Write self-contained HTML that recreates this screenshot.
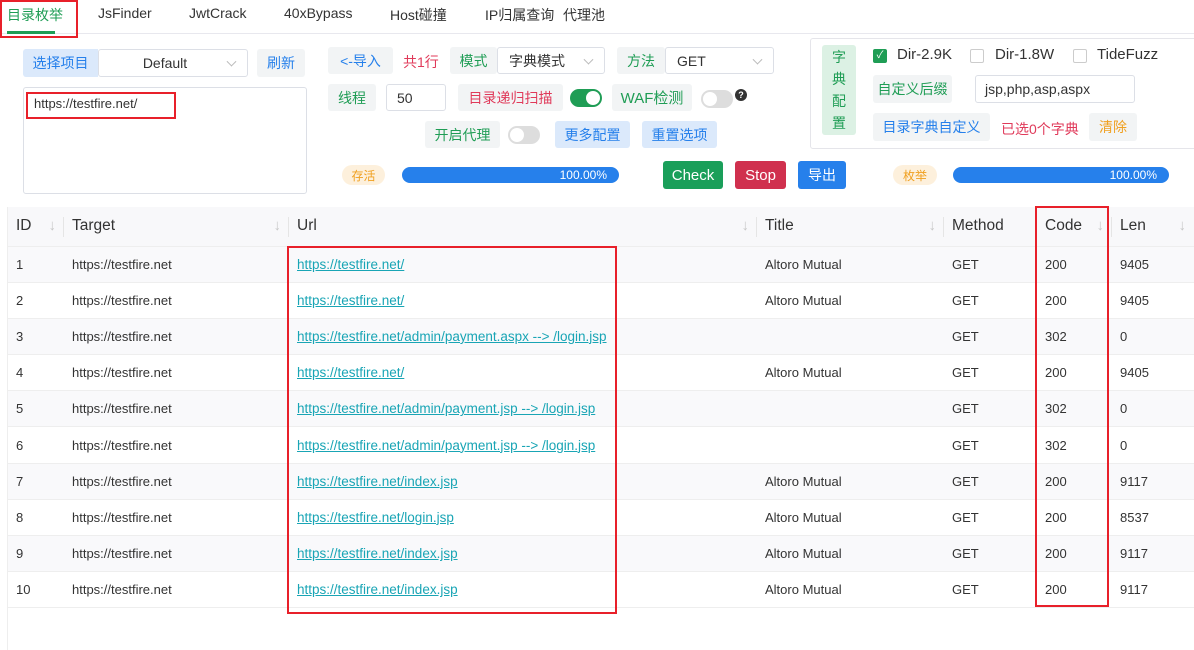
<!DOCTYPE html>
<html><head><meta charset="utf-8"><style>
*{box-sizing:border-box;margin:0;padding:0}
body{width:1194px;height:650px;overflow:hidden;background:#fff;font-family:"Liberation Sans","Noto Sans CJK SC",sans-serif;font-size:14px;color:#333;position:relative}
.a{position:absolute}
.btn{position:absolute;display:flex;align-items:center;justify-content:center;border-radius:3px;background:#f2f4f5;font-size:14px}
.g{color:#1f9d55}.b{color:#2680eb}.r{color:#e03a5a}.o{color:#f0a020}
.sel{position:absolute;border:1px solid #dcdfe6;border-radius:3px;background:#fff;display:flex;align-items:center;font-size:14px;color:#333}
.sel:after{content:"";position:absolute;right:12px;top:50%;width:6px;height:6px;border-right:1px solid #bbb;border-bottom:1px solid #bbb;transform:translateY(-70%) rotate(45deg)}
.sel.n:after{display:none}
.sw{position:absolute;width:32px;height:18px;border-radius:9px;background:#ddd}
.sw i{position:absolute;top:2px;left:2px;width:14px;height:14px;border-radius:50%;background:#fff}
.sw.on{background:#1f9d55}.sw.on i{left:16px}
.bar{position:absolute;height:16px;border-radius:8px;background:#2680eb;color:#fff;font-size:12px;text-align:right;padding-right:12px;line-height:16px}
.badge{position:absolute;height:20px;border-radius:10px;background:#fdf0dc;color:#f0a020;font-size:12px;display:flex;align-items:center;justify-content:center}
.cb{position:absolute;width:14px;height:14px;border:1px solid #ccc;border-radius:2px;background:#fff}
.rb{position:absolute;border:2px solid #e8202a}
table{position:absolute;left:8px;top:207px;border-collapse:collapse;table-layout:fixed;width:1186px}
th{height:39px;background:#f8f8fa;font-weight:normal;text-align:left;font-size:15.5px;color:#333;border-bottom:1px solid #eee;position:relative;padding-left:8px}
th .ar{position:absolute;right:8px;top:10px;color:#c8c8c8;font-size:15px}
th .dv{position:absolute;right:0;top:10px;height:20px;border-right:1px solid #e5e5e5}
td{height:36.2px;font-size:13px;color:#333;padding-left:8px;border-bottom:1px solid #eee;white-space:nowrap}
tr:nth-child(even) td{background:#f9f9fb}
td a{color:#19a5b5;text-decoration:underline;font-size:13.5px}
</style></head><body>
<div class="a" style="left:0;top:33px;width:1194px;border-bottom:1px solid #e8e8ee"></div>
<div class="a g" style="left:7px;top:5px">目录枚举</div>
<div class="a" style="left:7px;top:31px;width:48px;height:3px;background:#1f9d55"></div>
<div class="a" style="left:98px;top:5px">JsFinder</div>
<div class="a" style="left:189px;top:5px">JwtCrack</div>
<div class="a" style="left:284px;top:5px">40xBypass</div>
<div class="a" style="left:390px;top:5px">Host碰撞</div>
<div class="a" style="left:485px;top:5px">IP归属查询</div>
<div class="a" style="left:563px;top:5px">代理池</div>
<div class="rb" style="left:0;top:0;width:78px;height:38px"></div>

<div class="btn b" style="left:23px;top:49px;width:75px;height:28px;background:#dbe9fb;border-radius:3px 0 0 3px">选择项目</div>
<div class="sel" style="left:98px;top:49px;width:150px;height:28px;justify-content:center;padding-right:16px">Default</div>
<div class="btn b" style="left:257px;top:49px;width:48px;height:28px">刷新</div>
<div class="a" style="left:23px;top:87px;width:284px;height:107px;border:1px solid #dcdfe6;border-radius:3px"></div>
<div class="a" style="left:34px;top:96px;font-size:13px">https://testfire.net/</div>
<div class="rb" style="left:26px;top:92px;width:150px;height:27px"></div>

<div class="btn b" style="left:328px;top:47px;width:65px;height:27px">&lt;-导入</div>
<div class="a r" style="left:403px;top:52px">共1行</div>
<div class="btn g" style="left:450px;top:47px;width:47px;height:27px">模式</div>
<div class="sel" style="left:497px;top:47px;width:108px;height:27px;padding-left:11px">字典模式</div>
<div class="btn g" style="left:617px;top:47px;width:48px;height:27px">方法</div>
<div class="sel" style="left:665px;top:47px;width:109px;height:27px;padding-left:11px">GET</div>

<div class="btn g" style="left:328px;top:84px;width:48px;height:27px">线程</div>
<div class="sel n" style="left:386px;top:84px;width:60px;height:27px;padding-left:10px">50</div>
<div class="btn r" style="left:458px;top:84px;width:105px;height:27px">目录递归扫描</div>
<div class="sw on" style="left:570px;top:89px"><i></i></div>
<div class="btn g" style="left:612px;top:84px;width:80px;height:27px;font-size:15px">WAF检测</div>
<div class="sw" style="left:701px;top:90px"><i></i></div>
<div class="a" style="left:735px;top:89px;width:12px;height:12px;border-radius:50%;background:#333;color:#fff;font-size:9px;text-align:center;line-height:12px;font-weight:bold">?</div>

<div class="btn g" style="left:425px;top:121px;width:75px;height:27px">开启代理</div>
<div class="sw" style="left:508px;top:126px"><i></i></div>
<div class="btn b" style="left:555px;top:121px;width:75px;height:27px;background:#dbe9fb">更多配置</div>
<div class="btn b" style="left:642px;top:121px;width:75px;height:27px;background:#dbe9fb">重置选项</div>

<div class="badge" style="left:342px;top:165px;width:43px">存活</div>
<div class="bar" style="left:402px;top:167px;width:217px">100.00%</div>
<div class="btn" style="left:663px;top:161px;width:60px;height:28px;background:#1a9f5a;color:#fff;font-size:15px">Check</div>
<div class="btn" style="left:735px;top:161px;width:51px;height:28px;background:#d0304e;color:#fff;font-size:15px">Stop</div>
<div class="btn" style="left:798px;top:161px;width:48px;height:28px;background:#2680eb;color:#fff">导出</div>
<div class="badge" style="left:893px;top:165px;width:44px">枚举</div>
<div class="bar" style="left:953px;top:167px;width:216px">100.00%</div>

<div class="a" style="left:810px;top:38px;width:400px;height:111px;border:1px solid #e5e5ea;border-radius:3px"></div>
<div class="btn g" style="left:822px;top:45px;width:34px;height:90px;background:#dcf1e4;line-height:22px;text-align:center;flex-direction:column">字<br>典<br>配<br>置</div>
<div class="cb" style="left:873px;top:49px;background:#1f9d55;border-color:#1f9d55;color:#fff;font-size:10px;line-height:12px;text-align:center">✓</div>
<div class="a" style="left:897px;top:46px;font-size:15px">Dir-2.9K</div>
<div class="cb" style="left:970px;top:49px"></div>
<div class="a" style="left:995px;top:46px;font-size:15px">Dir-1.8W</div>
<div class="cb" style="left:1073px;top:49px"></div>
<div class="a" style="left:1097px;top:46px;font-size:15px">TideFuzz</div>
<div class="btn g" style="left:873px;top:75px;width:79px;height:28px">自定义后缀</div>
<div class="sel n" style="left:975px;top:75px;width:160px;height:28px;padding-left:9px">jsp,php,asp,aspx</div>
<div class="btn b" style="left:873px;top:113px;width:117px;height:28px">目录字典自定义</div>
<div class="a r" style="left:1001px;top:119px">已选0个字典</div>
<div class="btn o" style="left:1089px;top:113px;width:48px;height:28px">清除</div>

<div class="a" style="left:7px;top:207px;height:443px;border-left:1px solid #eee"></div>
<table>
<colgroup><col style="width:56px"><col style="width:225px"><col style="width:468px"><col style="width:187px"><col style="width:93px"><col style="width:75px"><col style="width:82px"></colgroup>
<tr><th>ID<span class="ar">↓</span><span class="dv"></span></th><th>Target<span class="ar">↓</span><span class="dv"></span></th><th>Url<span class="ar">↓</span><span class="dv"></span></th><th>Title<span class="ar">↓</span><span class="dv"></span></th><th>Method<span class="dv"></span></th><th>Code<span class="ar">↓</span><span class="dv"></span></th><th>Len<span class="ar">↓</span></th></tr>
<tr><td>1</td><td>https://testfire.net</td><td><a>https://testfire.net/</a></td><td>Altoro Mutual</td><td>GET</td><td>200</td><td>9405</td></tr>
<tr><td>2</td><td>https://testfire.net</td><td><a>https://testfire.net/</a></td><td>Altoro Mutual</td><td>GET</td><td>200</td><td>9405</td></tr>
<tr><td>3</td><td>https://testfire.net</td><td><a>https://testfire.net/admin/payment.aspx --&gt; /login.jsp</a></td><td></td><td>GET</td><td>302</td><td>0</td></tr>
<tr><td>4</td><td>https://testfire.net</td><td><a>https://testfire.net/</a></td><td>Altoro Mutual</td><td>GET</td><td>200</td><td>9405</td></tr>
<tr><td>5</td><td>https://testfire.net</td><td><a>https://testfire.net/admin/payment.jsp --&gt; /login.jsp</a></td><td></td><td>GET</td><td>302</td><td>0</td></tr>
<tr><td>6</td><td>https://testfire.net</td><td><a>https://testfire.net/admin/payment.jsp --&gt; /login.jsp</a></td><td></td><td>GET</td><td>302</td><td>0</td></tr>
<tr><td>7</td><td>https://testfire.net</td><td><a>https://testfire.net/index.jsp</a></td><td>Altoro Mutual</td><td>GET</td><td>200</td><td>9117</td></tr>
<tr><td>8</td><td>https://testfire.net</td><td><a>https://testfire.net/login.jsp</a></td><td>Altoro Mutual</td><td>GET</td><td>200</td><td>8537</td></tr>
<tr><td>9</td><td>https://testfire.net</td><td><a>https://testfire.net/index.jsp</a></td><td>Altoro Mutual</td><td>GET</td><td>200</td><td>9117</td></tr>
<tr><td>10</td><td>https://testfire.net</td><td><a>https://testfire.net/index.jsp</a></td><td>Altoro Mutual</td><td>GET</td><td>200</td><td>9117</td></tr>
</table>
<div class="rb" style="left:287px;top:246px;width:330px;height:368px"></div>
<div class="rb" style="left:1035px;top:206px;width:74px;height:401px"></div>
</body></html>
